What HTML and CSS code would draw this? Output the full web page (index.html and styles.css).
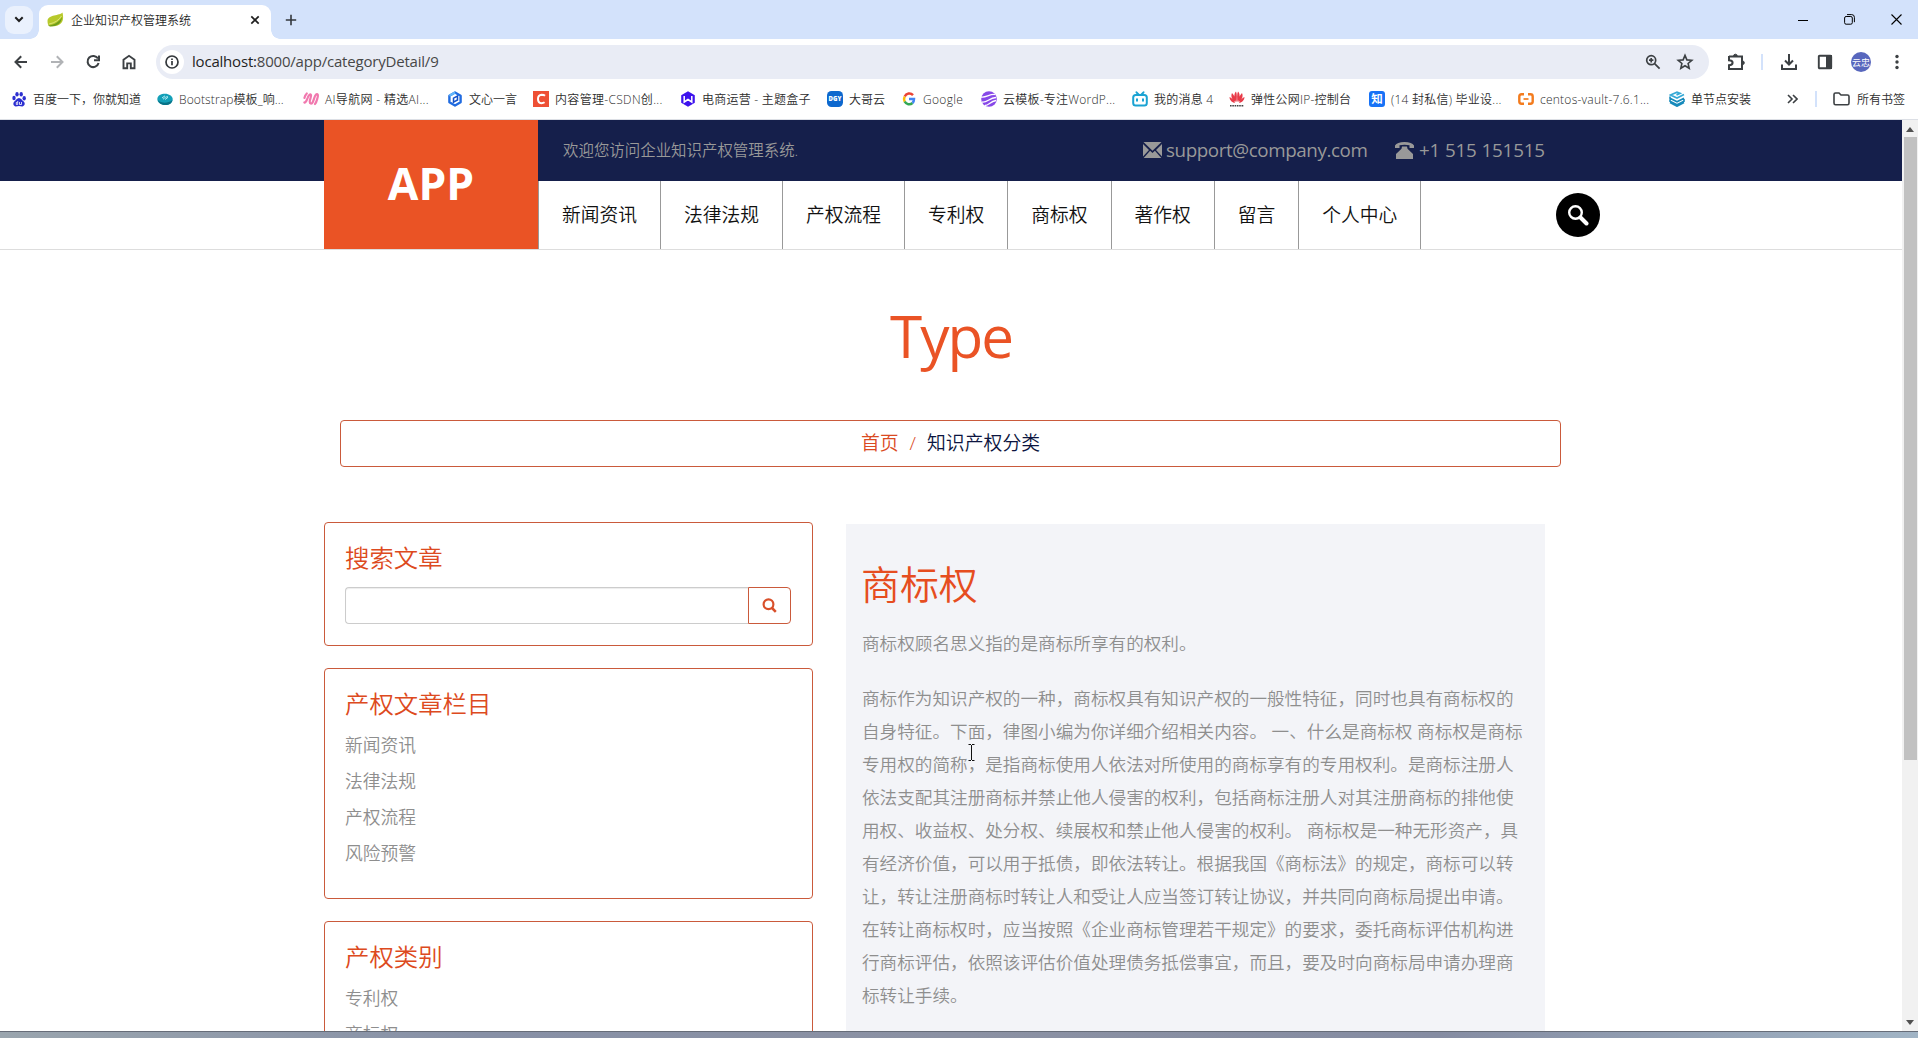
FILE: index.html
```html
<!DOCTYPE html>
<html lang="zh-CN">
<head>
<meta charset="utf-8">
<title>企业知识产权管理系统</title>
<link rel="stylesheet" href="styles.css">
</head>
<body>
<div class="browser">
  <div class="tabstrip">
    <div class="tab-search"><svg width="10" height="7" viewBox="0 0 10 7"><path d="M1.3 1.3 5 5l3.700-3.700" fill="none" stroke="#1f1f1f" stroke-width="2"/></svg></div>
    <div class="tab">
      <svg class="leaf" width="17" height="16" viewBox="0 0 17 16"><path d="M15.500.5C13 4 1 2 .5 9c0 2 .5 4 1.500 5C7 15 15 14 16 7c.3-2 0-4-.500-6.500z" fill="#b7c92b"/><path d="M1 13.500C8 13 13 9 15 5c0 5-4 9.500-12 9.500z" fill="#6f9d1c"/><path d="M2 12C8 11 12 8 14.500 4" stroke="#e3ec8c" fill="none" stroke-width=".8"/></svg>
      <span class="tab-title">企业知识产权管理系统</span>
      <svg width="10" height="10" viewBox="0 0 10 10"><path d="M1.300 1.300l7.400 7.400M8.700 1.300 1.300 8.700" stroke="#1f1f1f" stroke-width="1.700"/></svg>
    </div>
    <svg class="new-tab" width="12" height="12" viewBox="0 0 12 12"><path d="M6 .8v10.400M.8 6h10.400" stroke="#33373c" stroke-width="1.600"/></svg>
    <div class="window-buttons">
      <svg width="10" height="10" viewBox="0 0 10 10"><path d="M0 5.500h10" stroke="#000"/></svg>
      <svg width="11" height="11" viewBox="0 0 11 11" fill="none" stroke="#000"><rect x=".6" y="2.500" width="7.700" height="7.700" rx="1.500"/><path d="M3 .6h4.700q2.700 0 2.700 2.700v4.900"/></svg>
      <svg width="11" height="11" viewBox="0 0 11 11"><path d="M.5.5l10 10M10.500.5l-10 10" stroke="#000" stroke-width="1.100"/></svg>
    </div>
  </div>

  <div class="toolbar">
    <div class="nav-buttons">
      <svg width="24" height="24" viewBox="0 0 24 24" fill="none" stroke="#3c4043" stroke-width="2"><path d="M18 12H7M12.200 6.300 6.500 12l5.700 5.700"/></svg>
      <svg width="24" height="24" viewBox="0 0 24 24" fill="none" stroke="#b1b3b6" stroke-width="2"><path d="M6 12h11M11.800 6.300l5.700 5.700-5.700 5.700"/></svg>
      <svg width="24" height="24" viewBox="0 0 24 24" fill="none" stroke="#3c4043" stroke-width="2"><path d="M17 8.600A5.600 5.600 0 1 0 17.600 13M18 5.500v4.700h-5"/></svg>
      <svg width="24" height="24" viewBox="0 0 24 24" fill="none" stroke="#3c4043" stroke-width="1.900"><path d="M6.500 18.300V9.700L12 5.800l5.500 3.900v8.600h-3.700v-4.900h-3.600v4.900z"/></svg>
    </div>
    <div class="omnibox">
      <div class="site-info"><svg width="16" height="16" viewBox="0 0 16 16"><circle cx="8" cy="8" r="6" fill="none" stroke="#33373b" stroke-width="1.700"/><path d="M8 7v4.300M8 4.500v1.600" stroke="#33373b" stroke-width="1.700"/></svg></div>
      <span class="url"><b>localhost:</b>8000/app/categoryDetail/9</span>
      <svg class="zoom-icon" width="16" height="16" viewBox="0 0 16 16" fill="none" stroke="#3c4043" stroke-width="1.700"><circle cx="6.200" cy="6.200" r="4.500"/><path d="M9.600 9.600l5 5M6.200 4v4.400M4 6.200h4.400"/></svg>
      <svg width="18" height="18" viewBox="0 0 18 18" fill="none" stroke="#3c4043" stroke-width="1.600"><path d="M9 2.400l1.900 4.500 4.900.4-3.700 3.200 1.100 4.800L9 12.800l-4.200 2.500 1.100-4.800-3.700-3.200 4.900-.4z"/></svg>
    </div>
    <svg class="puzzle" width="18" height="18" viewBox="0 0 18 18" fill="none" stroke="#3c4043" stroke-width="2"><path d="M2 3.500h4.500M2 3v4.200q3.600.2 3.600 2.500T2 12.200V16h13V3.500H2"/><path d="M6.600 3a1.800 1.800 0 0 1 3.600 0zM15.500 8a1.800 1.800 0 0 1 0 3.600z" fill="#3c4043" stroke-width="1"/></svg>
    <i class="divider"></i>
    <svg class="download" width="18" height="18" viewBox="0 0 18 18" fill="none" stroke="#3c4043" stroke-width="2"><path d="M9 1v10M5 7.500l4 4 4-4M2 11.500V16h14v-4.500"/></svg>
    <svg class="panel-icon" width="16" height="16" viewBox="0 0 16 16"><rect x="1.800" y="1.800" width="12.400" height="12.400" rx=".8" fill="none" stroke="#3c4043" stroke-width="1.900"/><path d="M9 1h6v14H9z" fill="#3c4043"/></svg>
    <div class="avatar">云忠</div>
    <svg width="4" height="16" viewBox="0 0 4 16" fill="#3c4043"><circle cx="2" cy="2.500" r="1.700"/><circle cx="2" cy="8" r="1.700"/><circle cx="2" cy="13.500" r="1.700"/></svg>
  </div>

  <div class="bookmarks">
    <div class="mark-list">
      <div class="mark"><svg viewBox="0 0 16 16" fill="#2c2fd0"><ellipse cx="3" cy="7" rx="1.700" ry="2.200"/><ellipse cx="6" cy="3.200" rx="1.700" ry="2.300"/><ellipse cx="10.200" cy="3.200" rx="1.700" ry="2.300"/><ellipse cx="13.200" cy="7.200" rx="1.700" ry="2.200"/><path d="M8 7c2 0 3 2.300 4.700 3.600 2 2 .8 4.800-1.500 4.800-1.200 0-2-.4-3.200-.4s-2 .4-3.200.4c-2.300 0-3.300-2.800-1.500-4.800C5 9.300 6 7 8 7z"/><path d="M6.700 10v3.500H5.300v-2h1M8.500 11v2.500h2V11" fill="none" stroke="#fff" stroke-width=".8"/></svg><span>百度一下，你就知道</span></div>
      <div class="mark"><svg viewBox="0 0 16 16"><path d="M.3 8C.5 4.500 4 2.700 8 2.700S15.500 5 15.700 8s-3 6-7.200 6S.2 11.500.3 8z" fill="#14a0b8"/><path d="M1 9c3 3.500 10 3.500 14.500 0-.5 3-3 5-7 5S1.300 12 1 9z" fill="#087286"/><path d="M5 7l3-2.200M8 8.500l3-2.200M6 8.300c1.500-1.500 3.500-3 5-2.500" stroke="#b9eef5" fill="none"/></svg><span class="fit-tight">Bootstrap模板_响...</span></div>
      <div class="mark"><svg viewBox="0 0 16 16" fill="none" stroke="#f178ae" stroke-width="2.200" stroke-linecap="round"><path d="M1.400 11.500C2.500 12 4 9 4.800 6.500 5.500 4 7.500 2.500 8 4c.3 1.500-1 4-1.200 6-.3 3 1.800 3.500 3 1S11.500 5 13 3.500s2.300.5 1.600 3-1.100 5-2.600 6.500"/><path d="M1.400 7c.5-2 1.300-3.500 2.400-4.500"/></svg><span class="fit-wide">AI导航网 - 精选AI...</span></div>
      <div class="mark"><svg viewBox="0 0 16 16"><path d="M8 1.500l5.600 3.200v6.600L8 14.500l-5.600-3.200V4.700z" fill="none" stroke="#206be0" stroke-width="2.400" stroke-linejoin="round"/><path d="M2.400 4.700 8 1.500" stroke="#62b7fb" stroke-width="2.200"/><path d="M6.500 12V7.200L10.500 5v4l-4 2.200" fill="none" stroke="#1452c8" stroke-width="1.500"/></svg><span>文心一言</span></div>
      <div class="mark"><svg viewBox="0 0 16 16"><path d="M0 0h16v16H0z" fill="#ee5035"/><path d="M12 4.700Q11 3.800 8.700 3.800 5 4 5 8t3.300 4.200q2 0 3.300-.9" fill="none" stroke="#fff" stroke-width="2"/></svg><span class="fit-wide">内容管理-CSDN创...</span></div>
      <div class="mark"><svg viewBox="0 0 16 16"><path d="M8 .3l6.800 3.900v7.600L8 15.700l-6.800-3.900V4.200z" fill="#3d12ed"/><path d="M4.200 5v6L8 8.500l3.800 2.500V5" fill="none" stroke="#fff" stroke-width="1.500"/></svg><span class="fit">电商运营 - 主题盒子</span></div>
      <div class="mark"><svg viewBox="0 0 16 16"><rect width="16" height="16" rx="4.500" fill="#0d68ce"/><text x="8" y="10.300" font-size="6" font-weight="900" text-anchor="middle" fill="#fff" font-family="Open Sans, sans-serif" textLength="13">DGY</text></svg><span>大哥云</span></div>
      <div class="mark"><svg viewBox="0 0 16 16" fill="none" stroke-width="2.500"><path d="M12 4.200A5 5 0 0 0 3.700 5.500" stroke="#ea4335"/><path d="M3.700 5.500a5 5 0 0 0 0 5" stroke="#fbbc05"/><path d="M3.700 10.500A5 5 0 0 0 11.500 12" stroke="#34a853"/><path d="M11.500 12Q13 10.500 13 8H8" stroke="#4285f4"/></svg><span class="fit-wide">Google</span></div>
      <div class="mark"><svg viewBox="0 0 16 16"><circle cx="8" cy="8" r="7.800" fill="#8748e8"/><path d="M0 6c5 1 8-3 14-2.500M1 11c5 1 7-4 14-4.500M4 14.500c4 0 5-4 11-5" stroke="#fff" fill="none" stroke-width="1.300"/></svg><span class="fit">云模板-专注WordP...</span></div>
      <div class="mark"><svg viewBox="0 0 16 16" fill="none" stroke="#1ba3d3" stroke-width="2" stroke-linecap="round"><rect x="1.200" y="4" width="13.600" height="10.500" rx="2.500"/><path d="M4.500 1.300l2 2.200M11.500 1.300l-2 2.200M5 8.200v1.600M11 8.200v1.600"/></svg><span class="fit">我的消息 4</span></div>
      <div class="mark"><svg viewBox="0 0 16 16" fill="#e83b48"><path d="M7.500 11C5 8 4.500 3 7 .5 8.200 3 8 8 7.500 11zM8.500 11C11 8 11.500 3 9 .5 7.800 3 8 8 8.500 11zM6.500 11.200C3 9 1.500 5 3 2c2.500 2.200 3.500 6 3.500 9.200zM9.500 11.200C13 9 14.500 5 13 2c-2.500 2.200-3.500 6-3.500 9.200zM6 12C3 11.500.5 9 .5 6c2.500 1 4.500 3.500 5.500 6zM10 12c3-.5 5.500-3 5.500-6-2.500 1-4.500 3.500-5.500 6z"/><path d="M1 14.800h14" stroke="#444" stroke-width="1.400" stroke-dasharray="1.600 .7"/></svg><span class="fit">弹性公网IP-控制台</span></div>
      <div class="mark"><svg viewBox="0 0 16 16"><rect width="16" height="16" rx="3" fill="#1772f6"/><text x="8" y="12.200" font-size="11.500" font-weight="700" text-anchor="middle" fill="#fff" font-family="Noto Sans CJK SC, sans-serif">知</text></svg><span class="fit">(14 封私信) 毕业设...</span></div>
      <div class="mark"><svg viewBox="0 0 16 16" fill="none" stroke="#f37b1d" stroke-width="2.400"><path d="M6 3.300H3.500q-2.200 0-2.200 2.200v5q0 2.200 2.200 2.200H6M10 3.300h2.500q2.200 0 2.200 2.200v5q0 2.200-2.200 2.200H10"/><path d="M5.500 8h5" stroke-width="1.700"/></svg><span class="fit">centos-vault-7.6.1...</span></div>
      <div class="mark"><svg viewBox="0 0 16 16" fill="none" stroke="#178abb" stroke-width="2"><path d="M15 3.500L8 7 1.500 4 8 1.200l3 1.200-3.500 1.500" stroke="#35a9d6" stroke-width="1.700"/><path d="M1 5.500v1.800l7 3.500 7-3.500M1 8.300v1.900l7 3.500 7-3.500V8M1 11.500l7 3.700 7-3.700" stroke-width="1.600"/></svg><span>单节点安装</span></div>
    </div>
    <svg class="more" width="11" height="10" viewBox="0 0 11 10"><path d="M1 1l4 4-4 4M6 1l4 4-4 4" fill="none" stroke="#3c4043" stroke-width="1.600"/></svg>
    <i class="divider"></i>
    <svg class="folder" width="17" height="14" viewBox="0 0 17 14"><path d="M1 11V2.500Q1 1 2.500 1H6l2 2h6.500Q16 3 16 4.500V11q0 1.700-1.500 1.700h-12Q1 12.700 1 11z" fill="none" stroke="#3c4043" stroke-width="1.600"/></svg>
    <span>所有书签</span>
  </div>

  <div class="viewport">
    <div class="page">
      <header class="site-header">
        <a class="logo">APP</a>
        <div class="topbar">
          <span class="welcome">欢迎您访问企业知识产权管理系统.</span>
          <span class="contact mail"><svg width="19" height="16" viewBox="0 0 19 16" fill="#999"><path d="M.5 0h18L9.500 8.800zM0 2l6 6-6 6.500zM19 2l-6 6 6 6.500zM.7 16l6.400-7.200 2.400 2.300 2.400-2.300 6.400 7.200z"/></svg><span>support@company.com</span></span>
          <span class="contact phone"><svg width="19" height="17" viewBox="0 0 19 17" fill="#999"><path d="M0 6V3.500Q2 0 9.500 0T19 3.500V6h-4.500V3.300q-5-1-10 0V6zM7 4.500h5l.5 2.300L18 12v5H1v-5l5.500-5.200z"/></svg><span>+1 515 151515</span></span>
        </div>
        <nav class="menu">
          <a>新闻资讯</a><a>法律法规</a><a>产权流程</a><a>专利权</a><a>商标权</a><a>著作权</a><a>留言</a><a>个人中心</a>
          <button class="round-search"><svg width="22" height="22" viewBox="0 0 22 22" fill="none" stroke="#fff"><circle cx="8.500" cy="8.500" r="6.300" stroke-width="2.400"/><path d="M13.500 13.500l6 6" stroke-width="4" stroke-linecap="round"/></svg></button>
        </nav>
      </header>
      <h1>Type</h1>
      <div class="breadcrumb"><a>首页</a><i>/</i><span>知识产权分类</span></div>
      <div class="content">
        <aside>
          <section class="panel">
            <h2>搜索文章</h2>
            <div class="search"><input type="text"><button><svg width="15" height="15" viewBox="0 0 15 15" fill="none" stroke="#d9502b" stroke-width="2.200"><circle cx="6.500" cy="6.300" r="4.900"/><path d="M10 10l3.800 3.800" stroke-width="2.500"/></svg></button></div>
          </section>
          <section class="panel">
            <h2>产权文章栏目</h2>
            <ul><li>新闻资讯</li><li>法律法规</li><li>产权流程</li><li>风险预警</li></ul>
          </section>
          <section class="panel">
            <h2>产权类别</h2>
            <ul><li>专利权</li><li>商标权</li></ul>
          </section>
        </aside>
        <article>
          <h2>商标权</h2>
          <p>商标权顾名思义指的是商标所享有的权利。</p>
          <p>商标作为知识产权的一种，商标权具有知识产权的一般性特征，同时也具有商标权的<br>自身特征。下面，律图小编为你详细介绍相关内容。 一、什么是商标权 商标权是商标<br>专用权的简称，是指商标使用人依法对所使用的商标享有的专用权利。是商标注册人<br>依法支配其注册商标并禁止他人侵害的权利，包括商标注册人对其注册商标的排他使<br>用权、收益权、处分权、续展权和禁止他人侵害的权利。 商标权是一种无形资产，具<br>有经济价值，可以用于抵债，即依法转让。根据我国《商标法》的规定，商标可以转<br>让，转让注册商标时转让人和受让人应当签订转让协议，并共同向商标局提出申请。<br>在转让商标权时，应当按照《企业商标管理若干规定》的要求，委托商标评估机构进<br>行商标评估，依照该评估价值处理债务抵偿事宜，而且，要及时向商标局申请办理商<br>标转让手续。</p>
        </article>
      </div>
    </div>
    <div class="scrollbar"><i class="arrow up"></i><i class="thumb"></i><i class="arrow down"></i></div>
  </div>
  <div class="desktop-edge"></div>
  <svg class="cursor" width="7" height="17" viewBox="0 0 7 17"><path d="M.5.500H3M4 .5h2.500M3.500 1v15M.5 16.500H3M4 16.500h2.500" stroke="#111" fill="none"/></svg>
</div>
</body>
</html>
```
FILE: styles.css
```css
* { box-sizing: border-box; }
body {
  margin: 0;
  font-family: "Open Sans", "Noto Sans CJK SC", sans-serif;
  font-weight: 350;
  font-size: 12px;
  color: #1f1f1f;
  background: #fff;
}
svg { display: block; flex: none; }
h1, h2, p, ul { margin: 0; padding: 0; font-weight: 350; }
i { font-style: normal; }

.browser {
  display: flex;
  flex-direction: column;
  position: relative;
  width: 1918px;
  height: 1038px;
  overflow: hidden;
}

/* tab strip */
.tabstrip {
  display: flex;
  align-items: center;
  height: 39px;
  padding: 0 16px 0 5px;
  background: #d3e2fb;
}
.tab-search {
  display: grid;
  place-items: center;
  width: 28px;
  height: 28px;
  border-radius: 9px;
  background: #eaf1fd;
}
.tab {
  position: relative;
  display: flex;
  align-items: center;
  align-self: flex-end;
  width: 232px;
  height: 34px;
  margin-left: 6px;
  padding: 0 11px 5px 8px;
  border-radius: 9px 9px 0 0;
  background: #fff;
}
.tab::before, .tab::after {
  content: "";
  position: absolute;
  bottom: 0;
  width: 9px;
  height: 9px;
}
.tab::before { left: -9px; background: radial-gradient(circle at 0 0, transparent 8.500px, #fff 9px); }
.tab::after { right: -9px; background: radial-gradient(circle at 100% 0, transparent 8.500px, #fff 9px); }
.tab-title { flex: 1; margin-left: 7px; }
.new-tab { margin-left: 14px; }
.window-buttons { display: flex; align-items: center; gap: 36px; margin-left: auto; }

/* toolbar */
.toolbar {
  display: flex;
  align-items: center;
  height: 46px;
  padding: 0 19px 0 9px;
}
.nav-buttons { display: flex; gap: 12px; width: 147px; }
.omnibox {
  display: flex;
  align-items: center;
  width: 1553px;
  height: 34px;
  padding: 0 15px 0 4px;
  border-radius: 17px;
  background: #e9ecf5;
}
.site-info {
  display: grid;
  place-items: center;
  width: 24px;
  height: 24px;
  border-radius: 50%;
  background: #fff;
}
.url { flex: 1; margin-left: 8px; padding-bottom: 2px; font-size: 15px; font-weight: 400; color: #474747; letter-spacing: -.2px; }
.url b { font-weight: 400; color: #1f1f1f; }
.zoom-icon { margin-right: 15px; }
.puzzle { margin-left: 18px; }
.divider { width: 2px; height: 16px; background: #d3e2fb; }
.toolbar .divider { margin-left: 16px; }
.download { margin-left: 17px; }
.panel-icon { margin-left: 19px; }
.avatar {
  display: grid;
  place-items: center;
  width: 20px;
  height: 20px;
  margin: 0 24px 0 18px;
  border-radius: 50%;
  background: #5867bd;
  color: #fff;
  font-size: 9px;
  font-weight: 400;
  white-space: nowrap;
}

/* bookmarks bar */
.bookmarks {
  display: flex;
  align-items: center;
  height: 35px;
  padding: 0 0 6px 11px;
  border-bottom: 1px solid #dcdfe5;
  color: #2c2c2c;
  white-space: nowrap;
}
.mark-list {
  display: grid;
  grid-template-columns: 146px 146px 144px 86px 147px 147px 74px 80px 151px 97px 140px 149px 151px 118px;
}
.mark { display: flex; align-items: center; gap: 6px; }
.mark svg { width: 16px; height: 16px; }
.fit-tight { letter-spacing: .12px; }
.fit { letter-spacing: .24px; }
.fit-wide { letter-spacing: .32px; }
.bookmarks .divider { margin-left: 17px; }
.folder { margin: 0 7px 0 16px; }

/* page */
.viewport { display: flex; height: 911px; overflow: hidden; }
.page { width: 1902px; color: #8e8e8e; }
.site-header {
  display: grid;
  grid-template-columns: 214px 1fr;
  grid-template-rows: 61px 68px;
  height: 130px;
  padding-left: 324px;
  border-bottom: 1px solid #ddd;
  background: linear-gradient(#151f4b 61px, #fff 61px);
}
.logo {
  grid-row: 1 / 3;
  background: #ea5325;
  color: #fff;
  font-size: 44.400px;
  font-weight: 700;
  line-height: 126px;
  text-align: center;
}
.topbar { display: flex; align-items: center; padding: 0 0 2px 25px; color: #999; }
.welcome { width: 580px; font-size: 15.450px; }
.contact { display: flex; align-items: center; gap: 4px; font-size: 18.800px; font-weight: 400; }
.contact svg { margin-top: 1px; }
.mail { width: 252px; letter-spacing: -.4px; }
.phone { gap: 5px; letter-spacing: -.15px; }
.menu { display: flex; border-left: 1px solid #999; color: #111; }
.menu a { padding: 0 23px; border-right: 1px solid #999; font-size: 18.750px; line-height: 68px; }
.round-search {
  display: grid;
  place-items: center;
  width: 44px;
  height: 44px;
  margin: 12px 0 0 135px;
  padding: 0;
  border: 0;
  border-radius: 50%;
  background: #000;
}
h1 {
  margin: 51px 0 49px;
  font-size: 58.400px;
  font-weight: 400;
  line-height: 70px;
  letter-spacing: -2px;
  text-align: center;
  color: #ea5325;
}
.breadcrumb {
  display: flex;
  justify-content: center;
  gap: 11px;
  width: 1221px;
  height: 47px;
  margin-left: 340px;
  border: 1px solid #ca5a3b;
  border-radius: 4px;
  font-size: 18.850px;
  line-height: 44px;
  color: #da4a22;
}
.breadcrumb span { color: #0c1540; }
.content { display: flex; gap: 33px; padding: 55px 0 0 324px; }
aside { display: flex; flex-direction: column; gap: 22px; width: 489px; }
.panel { padding: 19px 20px 26px; border: 1px solid #ca5a3b; border-radius: 4px; }
.panel:first-child { padding-bottom: 21px; }
.panel h2 { margin-top: -1px; font-size: 24.400px; line-height: 34px; color: #dd4a20; }
.panel ul { margin-top: 6px; padding-bottom: 1px; list-style: none; }
.panel li { font-size: 17.800px; line-height: 36px; }
.search { display: flex; margin-top: 12px; }
.search input {
  width: 403px;
  height: 37px;
  border: 1px solid #ccc;
  border-right: 0;
  border-radius: 4px 0 0 4px;
  box-shadow: inset 0 1px 1px rgba(0, 0, 0, .075);
}
.search button {
  display: grid;
  place-items: center;
  width: 43px;
  height: 37px;
  padding: 0;
  border: 1px solid #ca5a3b;
  border-radius: 0 4px 4px 0;
  background: #fff;
}
article {
  width: 699px;
  height: 600px;
  margin-top: 2px;
  padding: 35px 0 0 16px;
  background: #f3f4f8;
  white-space: nowrap;
}
article h2 { margin-left: -1px; font-size: 38.900px; line-height: 50px; color: #e64d20; }
article p { margin-top: 18px; font-size: 17.630px; line-height: 33px; }
article p + p { margin-top: 22px; }

.scrollbar {
  display: flex;
  flex-direction: column;
  align-items: center;
  width: 16px;
  background: #f1f1f1;
}
.thumb { width: 13px; height: 623px; margin-top: 5px; background: #c1c1c1; }
.arrow { border: 4px solid transparent; }
.up { margin-top: 3px; border-bottom: 5px solid #505050; }
.down { margin: auto 0 2px; border-top: 5px solid #505050; }

.desktop-edge {
  height: 7px;
  border-top: 1px solid #666c78;
  background: linear-gradient(90deg, #9aa5ae, #8790a6 25%, #8b91a3 50%, #858ca2 75%, #a1b4c5);
}
.cursor { position: absolute; left: 968px; top: 744px; }
```
